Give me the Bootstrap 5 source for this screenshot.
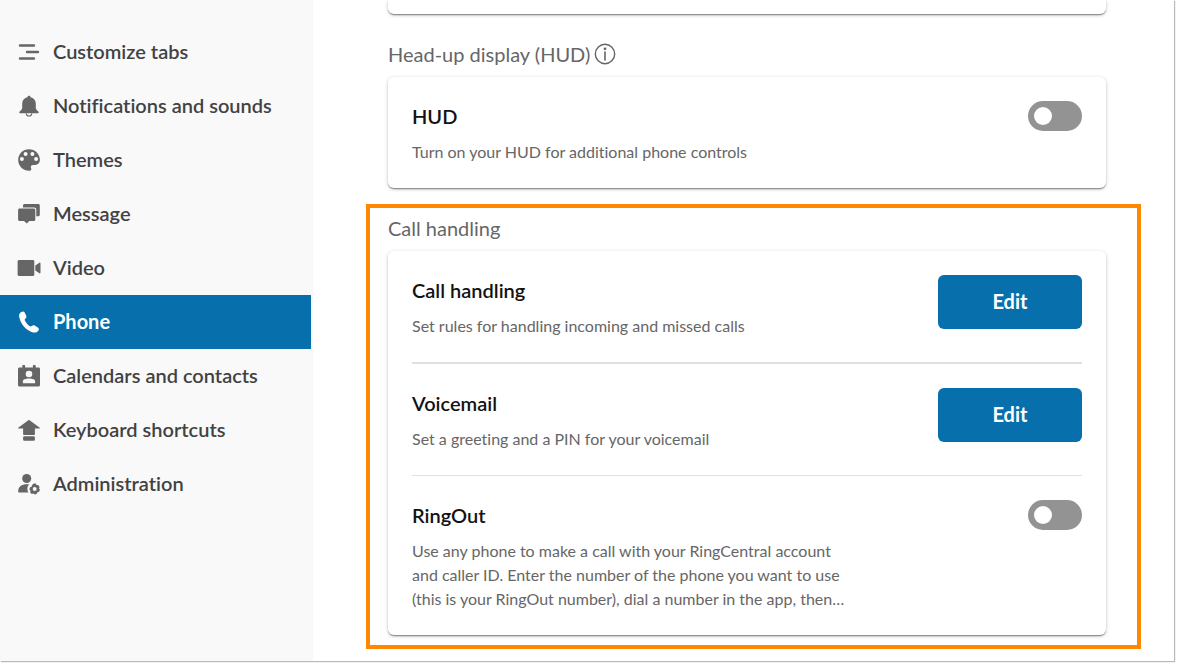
<!DOCTYPE html>
<html lang="en">
<head>
<meta charset="utf-8">
<meta name="viewport" content="width=device-width, initial-scale=1">
<title>Settings - Phone</title>
<link rel="stylesheet" href="https://cdn.jsdelivr.net/npm/bootstrap@5.3.0/dist/css/bootstrap.min.css">
<style>
  body { padding: 0 5px 5px 0; font-family: Lato, "Liberation Sans", sans-serif; font-variant-ligatures: none; color: #666; background: #fff; }
  .app-frame { min-height: calc(100vh - 5px); box-shadow: 1px 1px 1px #b8b8b8; }
  .side-menu { width: 313px; padding: 25px 2px 0 0; background: #f9f9f9; }
  .side-menu .nav-link { display: flex; align-items: center; gap: 12px; height: 54px; padding: 0 17px; font-size: 20px; line-height: 30px; font-weight: 600; color: #424242; border-radius: 0; }
  .side-menu .nav-link span { padding-bottom: 3px; }
  .side-menu svg { flex: none; width: 24px; height: 24px; fill: #666; }
  .side-menu .nav-link.active { background: #066fac; color: #fff; font-weight: 700; }
  .side-menu .nav-link.active svg { fill: #fff; }
  .settings { gap: 2px; padding: 0 33px 12px 53px; min-width: 0; }
  .settings-group { border: 4px solid transparent; padding: 0 31px 10px 18px; }
  .settings-group.marked { border-color: #ff8800; }
  .settings-group.cut-off { border-top: 0; }
  .group-title { height: 43px; margin: 0; padding-bottom: 3px; gap: 4px; font-size: 20px; line-height: 30px; font-weight: 400; color: #666; }
  .panel { padding: 0 24px; border: 0; border-radius: 6px; background: #fff; box-shadow: 0 2px 2px -1px rgba(0,0,0,.3), 0 1px 1px rgba(0,0,0,.2), 0 1px 4px rgba(0,0,0,.18); }
  .cut-off .panel { height: 14px; border-radius: 0 0 6px 6px; }
  .setting { padding: 24px 0; }
  .setting + .setting { border-top: 1px solid #e0e0e0; }
  .setting:first-child + .setting { border-top-width: 2px; }
  .setting-name { margin: 0 0 9px; font-size: 20px; line-height: 30px; font-weight: 600; color: #121212; }
  .setting-note { margin: 0; max-width: 440px; font-size: 16px; line-height: 24px; color: #666; }
  .btn-edit { width: 144px; height: 54px; padding: 0 12px 2px; font-size: 20px; line-height: 30px; font-weight: 700; border: 0; border-radius: 6px; --bs-btn-color: #fff; --bs-btn-bg: #066fac; --bs-btn-hover-color: #fff; --bs-btn-hover-bg: #055c90; }
  .form-switch .form-check-input { width: 54px; height: 30px; margin: 0; border: 0; border-radius: 15px; background-color: #939393; background-size: 24px; background-position: 3px center; background-image: url("data:image/svg+xml,%3csvg xmlns='http://www.w3.org/2000/svg' viewBox='-4 -4 8 8'%3e%3ccircle r='3' fill='white'/%3e%3c/svg%3e"); }
  .form-switch .form-check-input:checked { background-color: #066fac; background-position: 27px center; }
</style>
</head>
<body>
<div class="app-frame d-flex">
  <nav class="side-menu nav flex-column flex-nowrap flex-shrink-0" aria-label="Settings">
    <a class="nav-link" href="#"><svg viewBox="0 0 24 24"><path d="M3 5.500h14M10 12h11M3 18.500h14" fill="none" stroke="#666" stroke-width="2.400" stroke-linecap="round"/></svg><span>Customize tabs</span></a>
    <a class="nav-link" href="#"><svg viewBox="0 0 24 24"><path d="M12 1.800c-.9 0-1.500.6-1.500 1.400C7.300 3.900 5.200 6.300 5.200 9.500v4.300c0 1.400-.9 2.300-2.300 3.500-1 .9-1 2 .3 2h17.600c1.300 0 1.300-1.100.3-2-1.400-1.200-2.300-2.100-2.300-3.500V9.500c0-3.200-2.100-5.600-5.300-6.300 0-.8-.6-1.400-1.500-1.400z"/><path d="M9.300 19.500a2.700 2.500 0 0 0 5.400 0" fill="none" stroke="#666" stroke-width="1.200"/></svg><span>Notifications and sounds</span></a>
    <a class="nav-link" href="#"><svg viewBox="0 0 24 24"><path fill-rule="evenodd" d="M12 1.200C5.900 1.200 1.200 5.900 1.200 12S6 22.700 12.300 22.700c1.300 0 2-.8 2-1.800 0-.7-.5-1.100-.5-2 0-1.200.9-2 2.100-2h2.200c2.700 0 4.800-2.200 4.800-5.100C22.900 5.900 18 1.200 12 1.200zM4.900 8.900a2 2 0 1 1 0 4 2 2 0 0 1 0-4zM8.600 4a2 2 0 1 1 0 4 2 2 0 0 1 0-4zM15.400 4a2 2 0 1 1 0 4 2 2 0 0 1 0-4zM19.100 8.900a2 2 0 1 1 0 4 2 2 0 0 1 0-4z"/></svg><span>Themes</span></a>
    <a class="nav-link" href="#"><svg viewBox="0 0 24 24"><path d="M7.700 2h13.600c.9 0 1.500.7 1.500 1.500v9.300c0 .9-.6 1.500-1.500 1.500h-2V7.700c0-1.200-.9-2.100-2.100-2.100H6V3.500C6 2.700 6.700 2 7.700 2z"/><path d="M2.600 6.600h14.200c.9 0 1.500.6 1.500 1.500v9.300c0 .9-.6 1.500-1.500 1.500h-4.400l-2.700 2.500L7 18.900H2.600c-.9 0-1.500-.6-1.500-1.500V8.100c0-.9.6-1.500 1.500-1.500z"/></svg><span>Message</span></a>
    <a class="nav-link" href="#"><svg viewBox="0 0 24 24"><path d="M2.100 4.100h13.700c.9 0 1.500.6 1.500 1.500v12.800c0 .9-.6 1.500-1.500 1.500H2.100c-.9 0-1.500-.6-1.500-1.500V5.600c0-.9.6-1.500 1.500-1.500zM18.300 9.500l4.100-2.700c.6-.4 1.100-.1 1.100.6v9.200c0 .7-.5 1-1.100.6l-4.100-2.700z"/></svg><span>Video</span></a>
    <a class="nav-link active" href="#" aria-current="page"><svg viewBox="0 0 24 24"><path d="M4.300 2C5.600 1.200 7 1.300 7.700 2.600l1.500 3.100c.5 1.100.2 2-.7 2.700-.8.7-1 1.300-.6 2.200 1 2.200 2.700 4.200 4.700 5.500.8.500 1.500.5 2.200-.1.900-.8 1.800-1 2.900-.4l3.100 1.800c1.300.8 1.400 2.200.5 3.300-1.200 1.600-3.200 2.300-5.200 1.700C8.800 20.200 3.400 13.800 2.100 6.400 1.900 4.500 2.700 2.900 4.300 2z"/></svg><span>Phone</span></a>
    <a class="nav-link" href="#"><svg viewBox="0 0 24 24"><path fill-rule="evenodd" d="M6 1h1.400c.4 0 .7.300.7.700v1.800h7.800V1.700c0-.4.300-.7.700-.7H18c.4 0 .7.300.7.700v1.800h2.800c.9 0 1.500.6 1.500 1.500v16.100c0 .9-.6 1.500-1.500 1.500h-19c-.9 0-1.500-.6-1.500-1.500V5c0-.9.6-1.500 1.500-1.500h2.800V1.700C5.300 1.300 5.600 1 6 1zM12 6.700a3.300 3.300 0 1 0 0 6.600 3.300 3.300 0 0 0 0-6.600zM5.900 19.300h12.200v-2c0-1.800-2.700-2.700-6.100-2.700s-6.100.9-6.100 2.700z"/></svg><span>Calendars and contacts</span></a>
    <a class="nav-link" href="#"><svg viewBox="0 0 24 24"><path d="M11.400 2.200c.4-.3.800-.3 1.200 0l9.900 7.200c.6.500.4 1-.3 1h-4.300v5.900c0 .5-.3.800-.8.800H6.900c-.5 0-.8-.3-.8-.8v-5.900H1.800c-.7 0-.9-.5-.3-1z"/><rect x="6.100" y="18.200" width="11.800" height="4.500" rx="1.200"/></svg><span>Keyboard shortcuts</span></a>
    <a class="nav-link" href="#"><svg viewBox="0 0 24 24"><circle cx="9.700" cy="6.500" r="4.500"/><path d="M1.200 19.200c0-4.400 3.500-7 8.500-7 .9 0 1.700.1 2.500.3-1.400 1.400-2 3.100-1.800 5 .1 1.200.5 2.200 1.100 3.100H2.400c-.8 0-1.200-.5-1.200-1.400z"/><path fill-rule="evenodd" d="M16.700 11.600h2.200l.6 1.500 1.700-.1 1.400 1.900-.6 1.500 1 1.300-1 2.100-1.600.4-.5 1.500-2.100.8-1.400-.9-1.700.5-1.500-1.700.3-1.600-1.200-1.200.7-2.300 1.600-.6.500-1.600zM17.700 15.100a2 2 0 1 0 0 4 2 2 0 0 0 0-4z"/></svg><span>Administration</span></a>
  </nav>

  <main class="settings flex-grow-1 d-flex flex-column">
    <section class="settings-group cut-off"><div class="panel"></div></section>

    <section class="settings-group">
      <h2 class="group-title d-flex align-items-center">Head-up display (HUD)
        <svg width="22" height="22" viewBox="0 0 22 22" role="img" aria-label="Information"><circle cx="11" cy="11" r="9.700" fill="none" stroke="#666" stroke-width="1.400"/><circle cx="11" cy="5.800" r="1.400" fill="#666"/><path d="M11 9v8" stroke="#666" stroke-width="1.600" stroke-linecap="round"/></svg>
      </h2>
      <div class="panel">
        <div class="setting d-flex justify-content-between align-items-start">
          <div><h3 class="setting-name"><label for="hud">HUD</label></h3><p class="setting-note">Turn on your HUD for additional phone controls</p></div>
          <div class="form-switch p-0 m-0 d-flex"><input class="form-check-input" type="checkbox" role="switch" id="hud"></div>
        </div>
      </div>
    </section>

    <section class="settings-group marked">
      <h2 class="group-title d-flex align-items-center">Call handling</h2>
      <div class="panel">
        <div class="setting d-flex justify-content-between align-items-start">
          <div><h3 class="setting-name">Call handling</h3><p class="setting-note">Set rules for handling incoming and missed calls</p></div>
          <button type="button" class="btn btn-edit">Edit</button>
        </div>
        <div class="setting d-flex justify-content-between align-items-start">
          <div><h3 class="setting-name">Voicemail</h3><p class="setting-note">Set a greeting and a PIN for your voicemail</p></div>
          <button type="button" class="btn btn-edit">Edit</button>
        </div>
        <div class="setting d-flex justify-content-between align-items-start">
          <div><h3 class="setting-name"><label for="ringout">RingOut</label></h3><p class="setting-note">Use any phone to make a call with your RingCentral account and caller ID. Enter the number of the phone you want to use (this is your RingOut number), dial a number in the app, then…</p></div>
          <div class="form-switch p-0 m-0 d-flex"><input class="form-check-input" type="checkbox" role="switch" id="ringout"></div>
        </div>
      </div>
    </section>
  </main>
</div>
<script src="https://cdn.jsdelivr.net/npm/bootstrap@5.3.0/dist/js/bootstrap.bundle.min.js"></script>
</body>
</html>
